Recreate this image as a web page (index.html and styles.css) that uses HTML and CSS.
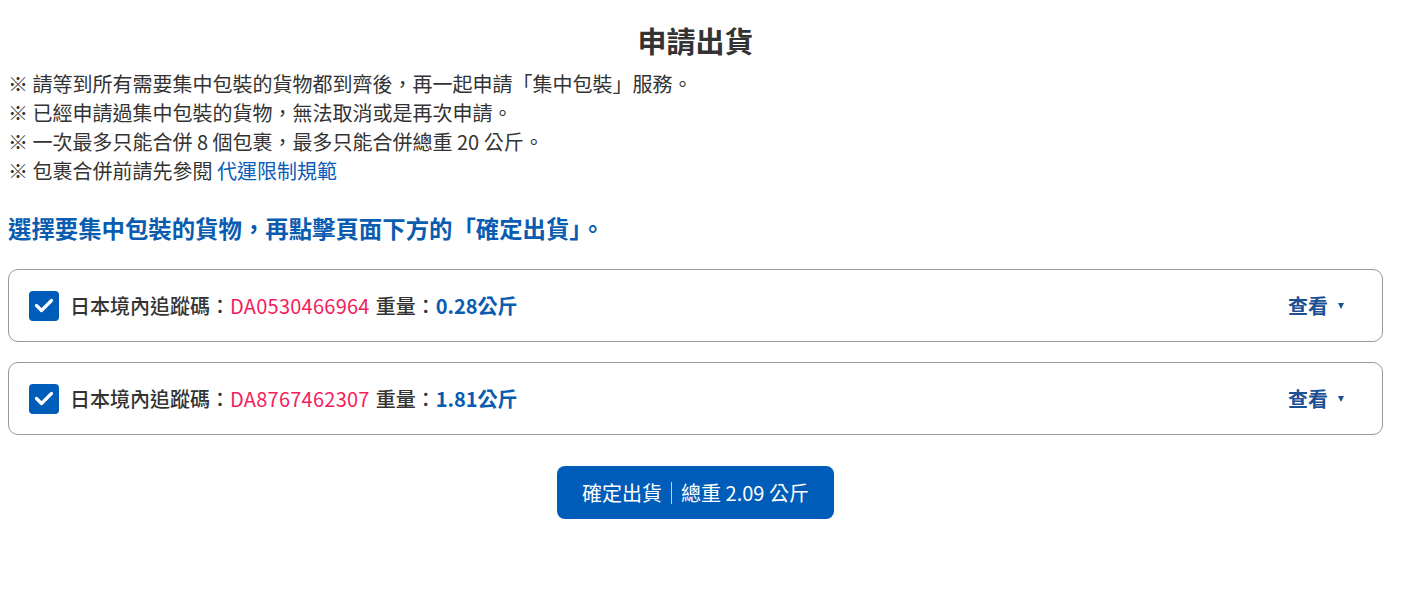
FILE: index.html
```html
<!DOCTYPE html>
<html lang="zh-Hant">
<head>
<meta charset="utf-8">
<title>申請出貨</title>
<link rel="stylesheet" href="styles.css">
</head>
<body>
<main class="page">
  <h1 class="title">申請出貨</h1>
  <ul class="notes">
    <li>※ 請等到所有需要集中包裝的貨物都到齊後，再一起申請「集中包裝」服務。</li>
    <li>※ 已經申請過集中包裝的貨物，無法取消或是再次申請。</li>
    <li>※ 一次最多只能合併 8 個包裹，最多只能合併總重 20 公斤。</li>
    <li>※ 包裹合併前請先參閱 <a class="link" href="#">代運限制規範</a></li>
  </ul>
  <h2 class="instruction">選擇要集中包裝的貨物，再點擊頁面下方的「確定出貨」。</h2>
  <div class="items">
    <div class="item">
      <label class="item-main">
        <span class="check"><svg viewBox="0 0 30 30" width="30" height="30"><rect width="30" height="30" rx="4" fill="#005cb9"/><path d="M7.5 14.5l5 5L22.5 9.5" fill="none" stroke="#fff" stroke-width="3.2" stroke-linecap="round" stroke-linejoin="round"/></svg></span>
        <span class="label">日本境內追蹤碼：</span><span class="code">DA0530466964</span>
        <span class="label wlabel">重量：</span><span class="weight">0.28公斤</span>
      </label>
      <button class="view">查看<span class="caret"></span></button>
    </div>
    <div class="item">
      <label class="item-main">
        <span class="check"><svg viewBox="0 0 30 30" width="30" height="30"><rect width="30" height="30" rx="4" fill="#005cb9"/><path d="M7.5 14.5l5 5L22.5 9.5" fill="none" stroke="#fff" stroke-width="3.2" stroke-linecap="round" stroke-linejoin="round"/></svg></span>
        <span class="label">日本境內追蹤碼：</span><span class="code">DA8767462307</span>
        <span class="label wlabel">重量：</span><span class="weight">1.81公斤</span>
      </label>
      <button class="view">查看<span class="caret"></span></button>
    </div>
  </div>
  <div class="actions">
    <button class="submit">確定出貨<span class="sep"></span>總重 2.09 公斤</button>
  </div>
</main>
</body>
</html>
```
FILE: styles.css
```css
* { box-sizing: border-box; }
body {
  margin: 8px;
  font-family: "Noto Sans CJK TC", "Noto Sans", sans-serif;
  color: #333;
  background: #fff;
}
.page {
  width: 1375px;
}
.title {
  margin: 18px 0 0;
  text-align: center;
  font-size: 29px;
  font-weight: 700;
  line-height: 28px;
  color: #333;
}
.notes {
  list-style: none;
  margin: 15px 0 0;
  padding: 0;
  font-size: 20px;
  line-height: 29px;
}
.link {
  color: #0a5cb8;
  text-decoration: none;
}
.instruction {
  margin: 27px 0 0;
  font-size: 23.4px;
  font-weight: 700;
  line-height: 32px;
  color: #0a5cb0;
}
.items {
  margin-top: 25px;
  display: flex;
  flex-direction: column;
  gap: 20px;
}
.item {
  height: 73px;
  border: 1px solid #999;
  border-radius: 10px;
  display: flex;
  align-items: center;
  justify-content: space-between;
  padding: 0 28px 0 20px;
}
.item-main {
  display: flex;
  align-items: center;
  font-size: 20px;
}
.check {
  display: flex;
  width: 30px;
  height: 30px;
  margin-right: 11px;
}
.label {
  font-weight: 500;
  color: #333;
}
.wlabel {
  margin-left: 6px;
}
.code {
  color: #f51d5b;
  letter-spacing: 0.25px;
}
.weight {
  color: #0a5cb0;
  font-weight: 700;
}
.view {
  border: 0;
  background: none;
  font-family: inherit;
  font-size: 20px;
  font-weight: 700;
  color: #1d4f94;
  display: flex;
  align-items: center;
  padding: 0 10px;
}
.caret {
  width: 0;
  height: 0;
  border-left: 3.5px solid transparent;
  border-right: 3.5px solid transparent;
  border-top: 6px solid #1d4f94;
  margin-left: 10px;
}
.actions {
  display: flex;
  justify-content: center;
  margin-top: 31px;
}
.submit {
  height: 53px;
  width: 277px;
  border: 0;
  border-radius: 8px;
  background: #005cb9;
  color: #fff;
  font-family: inherit;
  font-size: 20px;
  font-weight: 400;
  display: flex;
  align-items: center;
  justify-content: center;
}
.sep {
  width: 1px;
  height: 22px;
  margin: 0 9px;
  background: #e9c3d3;
}
```
